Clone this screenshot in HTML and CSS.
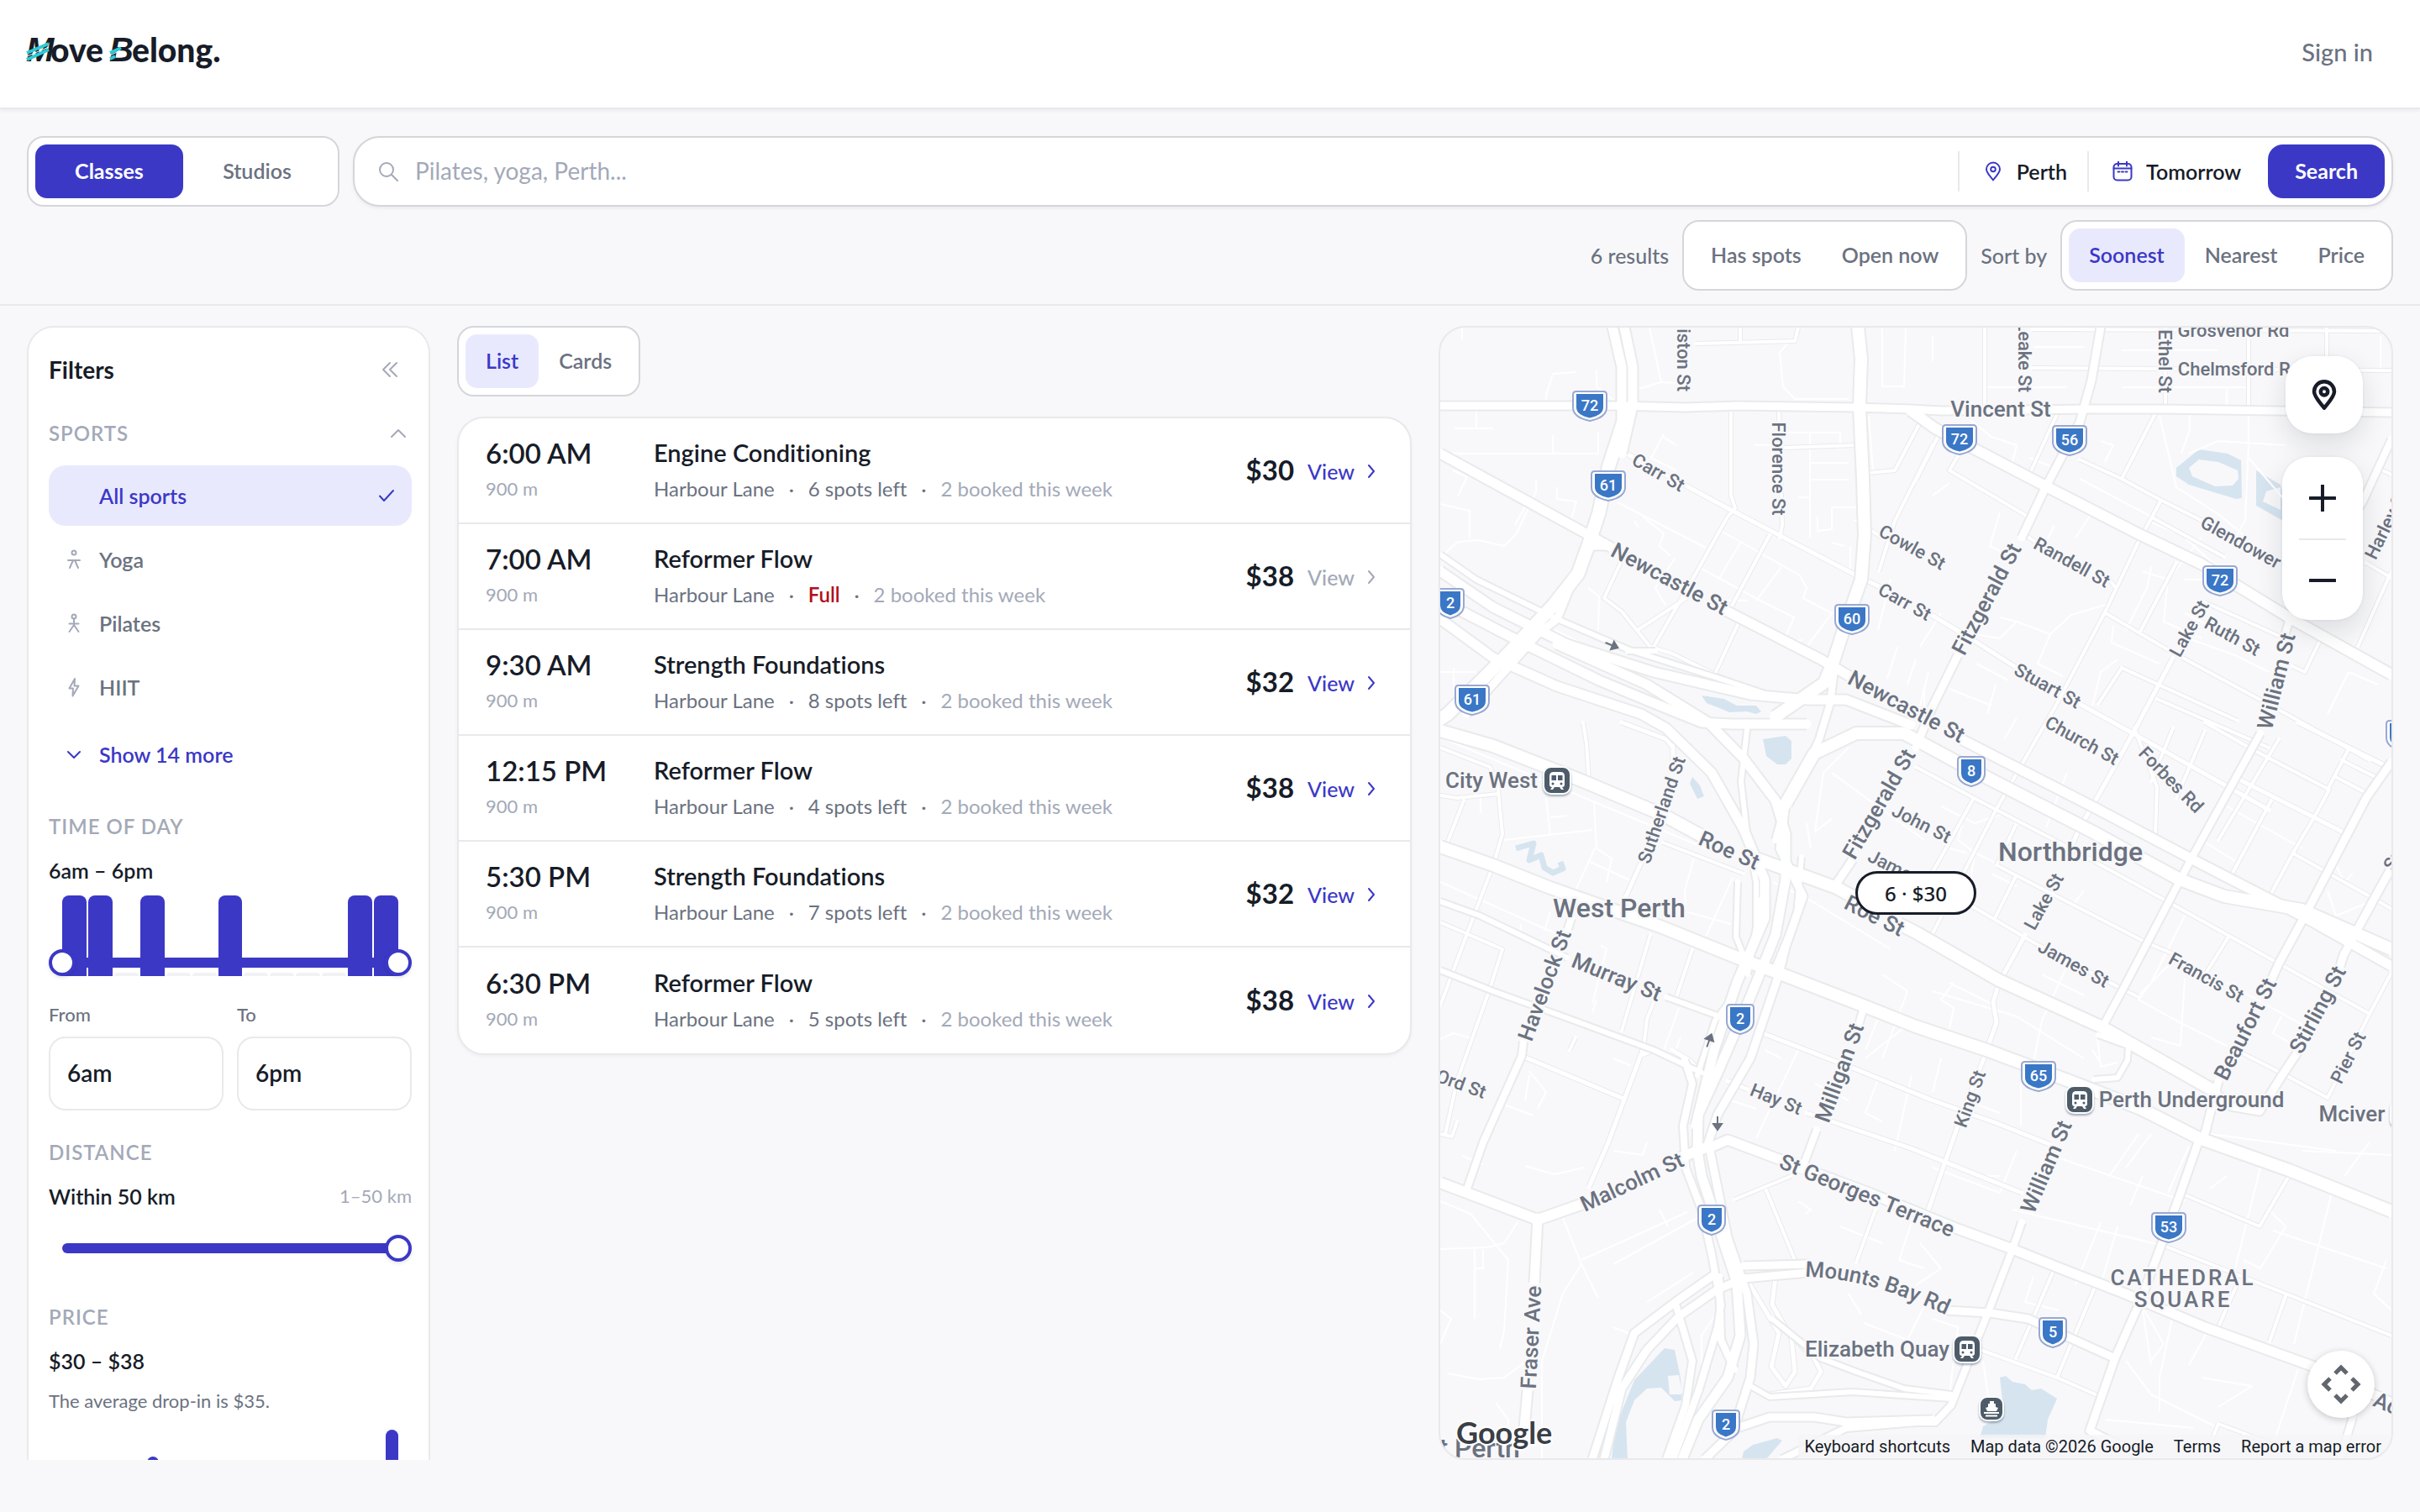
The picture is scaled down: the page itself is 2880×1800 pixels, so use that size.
FILE: index.html
```html
<!DOCTYPE html>
<html lang="en">
<head>
<meta charset="utf-8">
<meta name="viewport" content="width=device-width, initial-scale=1">
<title>Move Belong – Classes in Perth</title>
<link rel="stylesheet" href="styles.css">
</head>
<body>
<svg class="sprite" aria-hidden="true">
  <symbol id="i-search" viewBox="0 0 24 24"><circle cx="10" cy="10" r="8"/><path d="M16 16l7 7"/></symbol>
  <symbol id="i-pin" viewBox="0 0 24 24"><path d="M12 22.500C9 18.500 4 13.500 4 9.500a8 8 0 0 1 16 0C20 13.500 15 18.500 12 22.500z"/><circle cx="12" cy="9.500" r="2.800"/></symbol>
  <symbol id="i-calendar" viewBox="0 0 24 24"><rect x="1.500" y="3" width="21" height="19.500" rx="4"/><path d="M1.500 8.500h21M7 .500v5M17 .500v5"/><path d="M6.500 12.500h2M11 12.500h2M15.500 12.500h2"/></symbol>
  <symbol id="i-up" viewBox="0 0 24 24"><path d="M4 16l8-8 8 8"/></symbol>
  <symbol id="i-down" viewBox="0 0 24 24"><path d="M5 9l7 7 7-7"/></symbol>
  <symbol id="i-right" viewBox="0 0 24 24"><path d="M9 5l6 7-6 7"/></symbol>
  <symbol id="i-check" viewBox="0 0 24 24"><path d="M4 12.500l5 5.500L20 6"/></symbol>
  <symbol id="i-yoga" viewBox="0 0 24 24"><circle cx="12" cy="4" r="2.500"/><path d="M5 13h14M7 22l4-9h2l4 9"/></symbol>
  <symbol id="i-pilates" viewBox="0 0 24 24"><circle cx="12" cy="4" r="2.500"/><path d="M12 6.500V14M6.500 12.500h11M6.500 22l5.500-8 5.500 8"/></symbol>
  <symbol id="i-bolt" viewBox="0 0 24 24"><path d="M13 2L6.500 13.500H11L10.500 22.500 17.500 10.500H12.500z"/></symbol>
  <symbol id="i-collapse" viewBox="0 0 24 24"><path d="M12 4l-8 8 8 8M20 4l-8 8 8 8"/></symbol>
</svg>

<header class="topbar">
  <a class="logo" href="#" aria-label="Move Belong">
    <svg viewBox="0 0 240 48" width="240" height="48">
      <text class="logo-cap" x="-1" y="36">M</text>
      <text class="logo-text" x="28" y="37">ove</text>
      <text class="logo-cap" x="98" y="36">B</text>
      <text class="logo-text" x="125" y="37">elong.</text>
      <path class="logo-gap" d="M0 30L26 19M99 29l12-6"/>
      <path class="logo-stripe" d="M0 26L26 15M0 34L26 22"/>
      <path class="logo-stripe" d="M99 26l13-6M99 33l6-3"/>
    </svg>
  </a>
  <a class="signin" href="#">Sign in</a>
</header>

<section class="toolbar">
  <form class="search-row" action="#">
    <div class="segmented wide">
      <button type="button" class="primary">Classes</button>
      <button type="button">Studios</button>
    </div>
    <div class="searchbox">
      <svg class="icon muted"><use href="#i-search"/></svg>
      <input type="search" aria-label="Search classes" placeholder="Pilates, yoga, Perth...">
      <button type="button" class="facet"><svg class="icon"><use href="#i-pin"/></svg>Perth</button>
      <button type="button" class="facet"><svg class="icon"><use href="#i-calendar"/></svg>Tomorrow</button>
      <button type="submit" class="primary submit">Search</button>
    </div>
  </form>
  <div class="sort-row">
    <span>6 results</span>
    <div class="segmented"><button type="button">Has spots</button><button type="button">Open now</button></div>
    <span>Sort by</span>
    <div class="segmented"><button type="button" class="active">Soonest</button><button type="button">Nearest</button><button type="button">Price</button></div>
  </div>
</section>

<main class="content">
  <aside class="filters">
    <div class="filters-head"><h2>Filters</h2><button type="button" class="plain" aria-label="Collapse filters"><svg class="icon"><use href="#i-collapse"/></svg></button></div>
    <section class="sports">
      <button type="button" class="group-head"><span class="group-title">Sports</span><svg class="icon"><use href="#i-up"/></svg></button>
      <ul>
        <li><button type="button" class="sport selected"><span class="icon"></span><span>All sports</span><svg class="icon"><use href="#i-check"/></svg></button></li>
        <li><button type="button" class="sport"><svg class="icon"><use href="#i-yoga"/></svg><span>Yoga</span></button></li>
        <li><button type="button" class="sport"><svg class="icon"><use href="#i-pilates"/></svg><span>Pilates</span></button></li>
        <li><button type="button" class="sport"><svg class="icon"><use href="#i-bolt"/></svg><span>HIIT</span></button></li>
      </ul>
      <button type="button" class="sport more"><svg class="icon"><use href="#i-down"/></svg><span>Show 14 more</span></button>
    </section>
    <section class="group">
      <h3 class="group-title">Time of day</h3>
      <p class="value">6am – 6pm</p>
      <div class="histogram">
        <div class="bars"><i style="height:100%"></i><i style="height:100%"></i><i></i><i style="height:100%"></i><i></i><i></i><i style="height:100%"></i><i></i><i></i><i></i><i></i><i style="height:100%"></i><i style="height:100%"></i></div>
        <div class="dual-range">
          <input type="range" min="6" max="18" value="6" aria-label="Earliest start">
          <input type="range" min="6" max="18" value="18" aria-label="Latest start">
        </div>
      </div>
      <div class="from-to">
        <label>From<input type="text" value="6am"></label>
        <label>To<input type="text" value="6pm"></label>
      </div>
    </section>
    <section class="group">
      <h3 class="group-title">Distance</h3>
      <div class="value-row"><label class="value" for="distance">Within 50 km</label><span class="hint">1–50 km</span></div>
      <div class="single-range"><input type="range" id="distance" min="1" max="50" value="50"></div>
    </section>
    <section class="group">
      <h3 class="group-title">Price</h3>
      <p class="value">$30 – $38</p>
      <p class="note">The average drop-in is $35.</p>
      <div class="histogram">
        <div class="bars"><i style="height:34%"></i><i></i><i></i><i></i><i></i><i></i><i style="height:67%"></i><i></i><i></i><i></i><i></i><i></i><i></i><i></i><i></i><i></i><i></i><i></i><i></i><i></i><i></i><i></i><i></i><i style="height:100%"></i></div>
      </div>
    </section>
  </aside>

  <section class="results">
    <div class="segmented"><button type="button" class="active">List</button><button type="button">Cards</button></div>
    <ul class="classes">
      <li><div class="when"><strong>6:00 AM</strong><span>900 m</span></div><div class="what"><h3>Engine Conditioning</h3><p><span>Harbour Lane</span><b>·</b><span>6 spots left</span><b>·</b><span class="faint">2 booked this week</span></p></div><div class="price"><strong>$30</strong><a href="#">View<svg class="icon"><use href="#i-right"/></svg></a></div></li>
      <li><div class="when"><strong>7:00 AM</strong><span>900 m</span></div><div class="what"><h3>Reformer Flow</h3><p><span>Harbour Lane</span><b>·</b><span class="full">Full</span><b>·</b><span class="faint">2 booked this week</span></p></div><div class="price"><strong>$38</strong><a class="off" href="#">View<svg class="icon"><use href="#i-right"/></svg></a></div></li>
      <li><div class="when"><strong>9:30 AM</strong><span>900 m</span></div><div class="what"><h3>Strength Foundations</h3><p><span>Harbour Lane</span><b>·</b><span>8 spots left</span><b>·</b><span class="faint">2 booked this week</span></p></div><div class="price"><strong>$32</strong><a href="#">View<svg class="icon"><use href="#i-right"/></svg></a></div></li>
      <li><div class="when"><strong>12:15 PM</strong><span>900 m</span></div><div class="what"><h3>Reformer Flow</h3><p><span>Harbour Lane</span><b>·</b><span>4 spots left</span><b>·</b><span class="faint">2 booked this week</span></p></div><div class="price"><strong>$38</strong><a href="#">View<svg class="icon"><use href="#i-right"/></svg></a></div></li>
      <li><div class="when"><strong>5:30 PM</strong><span>900 m</span></div><div class="what"><h3>Strength Foundations</h3><p><span>Harbour Lane</span><b>·</b><span>7 spots left</span><b>·</b><span class="faint">2 booked this week</span></p></div><div class="price"><strong>$32</strong><a href="#">View<svg class="icon"><use href="#i-right"/></svg></a></div></li>
      <li><div class="when"><strong>6:30 PM</strong><span>900 m</span></div><div class="what"><h3>Reformer Flow</h3><p><span>Harbour Lane</span><b>·</b><span>5 spots left</span><b>·</b><span class="faint">2 booked this week</span></p></div><div class="price"><strong>$38</strong><a href="#">View<svg class="icon"><use href="#i-right"/></svg></a></div></li>
    </ul>
  </section>

  <section class="map" aria-label="Map of Perth">
    <svg class="tiles" viewBox="1714 390 1132 1346" preserveAspectRatio="xMidYMid slice">
      <defs>
        <g id="minor">
          <path class="w5" d="M1930 537L2056 605L2213 687L2240 700M2295 730L2345 760L2400 795M2475 838L2540 874L2700 964"/>
          <path class="w4" d="M2060 490V590L2065 605L2056 615L2018 683L1968 770M2117 490L2121 625L2118 640M2106 637L2060 723M2071 737L2041 802M1930 667L1909 712L1930 728L1964 770L1990 778L2041 803L2110 830M2010 710L1949 750M2071 390V407M2018 409L2136 406L2140 390M2224 563L2255 560L2285 503M2300 530L2255 620L2236 680M2123 533L2209 530M2209 620L2240 640"/>
          <path class="w4" d="M2362 390V483M2418 438L2846 441M2676 400V486M2769 390V441M2418 392L2846 394M2577 390V485M2448 493L2416 563M2311 510L2280 572M2330 543L2320 560L2410 613M2475 547L2525 570L2571 595L2621 620M2565 492L2525 570M2571 597L2544 647L2506 727L2445 843L2425 877L2376 963L2299 1113M2506 730L2586 777L2712 845L2820 905M2563 617L2647 663M2590 670L2548 750M2410 637L2430 650M2510 690L2518 700M2624 717L2712 757M2762 760L2743 800L2728 793M2846 680L2806 770M2826 556L2846 565M2816 670L2846 688"/>
          <path class="w5" d="M2586 783L2540 870L2490 960L2475 985L2460 1020M2410 1113L2379 1170L2372 1193L2376 1217L2362 1257L2330 1340L2295 1440"/>
          <path class="w4" d="M2525 795L2663 858M2567 832L2700 890M2525 795L2497 838M2280 913L2349 950L2464 1010L2579 1073L2712 1147L2820 1207L2846 1158M2299 1050L2349 1080L2422 1123L2525 1177L2545 1187M2376 1030L2556 1123L2590 1137M2820 1207L2770 1307L2720 1280L2667 1253M2349 950L2299 1040M2399 982L2376 1030M2399 1043L2374 1093M2540 867L2567 937L2565 993M2682 893L2772 940L2754 973L2728 1017L2701 1067M2703 953L2655 1043M2731 1017L2820 1067L2846 1082M2787 905L2827 925M2796 890L2770 940M2624 860L2682 893M2651 1117L2620 1167M2586 867L2560 930M2624 870L2590 950M2780 925L2818 945M2712 880L2640 1000"/>
          <path class="w5" d="M2735 860L2846 915M2663 927L2793 993M2090 1227L2209 1273L2300 1310L2376 1337L2441 1363M2056 1287L2080 1297M2150 1325L2274 1367L2406 1420"/>
          <path class="w4" d="M2601 1423L2689 1460L2724 1400M2575 1483L2720 1540L2846 1590M2720 1543L2701 1597M2445 1510L2399 1617M2494 1530L2448 1640M2357 1607L2448 1640L2498 1662M2663 1527L2640 1580M2102 1417L2136 1500M2064 1428L2132 1400M2232 1440L2209 1503M2640 1695L2630 1720M2640 1695L2720 1725"/>
          <path class="w4" d="M1714 947L1734 950L1782 945M1714 890L1773 913L1782 930L1788 993L1777 1030L1754 1090L1714 1197M1742 953L1721 1007M1884 860L1888 885L1891 930M1714 1098L1742 1110L1788 1130L1773 1177L1734 1287L1720 1350M1964 1113L1930 1227M2014 1130L1995 1187M1968 1193L1960 1213L1956 1247M1979 1003L2075 1040M1714 1350L1728 1353L1734 1335M1875 1235L1868 1250"/>
          <path class="w5" d="M1991 887V915M1953 1027L1935 1067M1930 860L1983 880L1991 890M1956 1247L1914 1360L1891 1413M1811 1257L1930 1307M1956 1255L1968 1250"/>
          <path class="w5" d="M2113 1520L2109 1553L2132 1593L2136 1633L2125 1650L2108 1627L2117 1587L2083 1530M2132 1590L2159 1617L2167 1633L2155 1653L2106 1660M2025 1277L2010 1262L1990 1250"/>
        </g>
        <g id="major">
          <path class="w8" d="M1714 483H1922L2006 485L2067 483L2209 485L2274 487L2310 489L2490 487L2571 487L2846 491"/>
          <path class="w10" d="M2274 489L2303 510L2433 578L2548 637L2621 672L2724 735L2846 803"/>
          <path class="w9" d="M1919 389L1930 437V503M1933 389L1943 437V483L1930 540"/>
          <path class="w14" d="M1934 495L1914 557L1903 610L1891 647L1878 683L1849 720L1796 777L1723 850L1700 865"/>
          <path class="w8" d="M1872 690L1853 737L1830 755L1790 800L1745 850M1891 650L1910 650"/>
          <path class="w9" d="M1714 540L1891 637L1918 652M2054 727L2167 785L2201 805M2330 878L2490 960L2609 1023L2739 1090L2846 1150"/>
          <path class="w12" d="M2211 389L2215 427L2213 483L2217 570L2219 637L2215 690L2194 750L2182 787L2171 813L2113 853"/>
          <path class="w7" d="M2184 790L2178 837L2165 880L2159 893L2125 957L2113 1000"/>
          <path class="w6" d="M1714 660L1757 690L1853 737L1937 773L2044 807L2113 830M1937 775L1970 775M1714 1073L1761 1090L1865 1140M1983 1187L2041 1208M1714 1155L1777 1180L1868 1213L1968 1250L2025 1277"/>
          <path class="w9" d="M1714 680L1777 723L1865 767L1968 800L2083 827L2152 833L2197 833L2274 863M1738 727L1815 767L1903 810L1968 837L2025 860L2060 862H2150"/>
          <path class="w9" d="M1714 737L1777 783L1853 817L1953 850L1983 867L2037 920L2075 987L2100 1047V1093L2067 1170L2040 1250L2018 1340"/>
          <path class="w9" d="M1853 767L1960 815L2033 860L2075 903L2113 953L2125 993V1047L2113 1113L2083 1187L2044 1277L2021 1327L2020 1370L2025 1400L2044 1457L2067 1527L2071 1590L2056 1640L2021 1690L2002 1737"/>
          <path class="w8" d="M2125 957L2118 1010L2146 1067L2125 1127L2117 1160L2083 1260L2044 1327L2033 1360L2056 1473L2079 1540L2087 1600L2083 1640L2067 1690"/>
          <path class="w6" d="M2080 860L2072 930L2080 1000L2090 1050V1110L2060 1190L2041 1215L2020 1280M2068 1050L2066 1115L2077 1143M2144 1020L2138 1090L2113 1150M2096 1070L2080 1160"/>
          <path class="w7" d="M2005 1262L2014 1290L2003 1340L2006 1390L2025 1440L2037 1493L2048 1553L2044 1580L2021 1657L1991 1737M1995 1555L2014 1620L2006 1673L1983 1737M2046 1520L2048 1595L2064 1630"/>
          <path class="w12" d="M2125 957L2159 897L2209 873H2266L2334 910L2490 990L2594 1047L2647 1067L2739 1083L2846 1130"/>
          <path class="w11" d="M1714 870L1777 888L1884 930L1979 970L2025 995M2090 1022L2186 1057L2210 1070M2260 1100L2280 1110L2379 1167L2502 1223L2632 1297"/>
          <path class="w11" d="M1714 1008L1777 1030L1845 1057L1930 1087L1976 1103L2075 1143L2113 1157L2217 1197L2280 1222L2364 1250L2471 1290L2548 1320L2617 1355L2724 1393L2846 1442"/>
          <path class="w9" d="M2033 1367L2056 1357L2117 1380L2224 1420L2330 1463L2395 1487L2452 1510L2529 1540L2624 1580L2754 1627L2846 1670"/>
          <path class="w10" d="M1714 1408L1830 1452L1884 1433M2000 1378L2033 1365"/>
          <path class="w9" d="M1830 1450L1826 1527M1818 1655L1814 1700"/>
          <path class="w8" d="M2075 1507L2152 1505M2316 1560L2368 1563L2414 1570L2464 1593L2517 1617M2041 1517L1998 1547L1945 1587L1926 1640L1895 1737M2152 1515L2075 1522L2044 1535L1998 1567L1960 1607L1930 1653L1909 1737"/>
          <path class="w7" d="M2690 873L2609 1020L2529 1173L2502 1223M2724 740L2718 760M2406 1455L2395 1487L2368 1557L2322 1673L2303 1693H2280L2197 1700L2121 1737"/>
          <path class="w8" d="M2846 907L2816 950L2743 1090L2712 1147L2704 1165M2640 1287L2624 1350L2617 1357L2594 1423L2548 1547L2517 1617L2487 1703L2500 1710L2560 1737M2846 1033L2827 1067L2789 1137L2785 1150M2736 1250L2716 1280L2689 1323L2655 1317L2632 1297M2500 389L2489 453L2475 503L2433 583L2406 640M2330 780L2299 843L2280 890M2205 1023L2182 1057"/>
          <path class="w7" d="M2217 1203L2212 1220M2162 1345L2144 1393M1870 1093L1866 1106M1813 1240L1811 1257L1765 1360L1746 1415M2846 523L2812 597L2804 610M2800 1687L2785 1737"/>
          <path class="w6" d="M2083 1650L2106 1663L2205 1657L2322 1665M2109 1570L2167 1617L2209 1633L2266 1653L2322 1660M2492 1285L2520 1283L2532 1262L2533 1245L2497 1232"/>
          <path class="w8" d="M2029 1737L2067 1700L2106 1687L2159 1687L2197 1693L2300 1690"/>
        </g>
      </defs>

      <g class="water">
        <path fill-rule="evenodd" d="M2590 557L2617 535L2651 540L2667 548L2668 593L2661 594L2605 577L2590 567zM2605 557L2617 547L2640 550L2663 560L2664 570L2657 578L2636 579L2609 567z"/>
        <path fill-rule="evenodd" d="M2685 560L2714 577L2726 625L2685 602zM2714 580L2697 585L2693 597L2714 607z"/>
        <path d="M2025 828L2052 832L2067 840H2090L2096 847L2090 850L2079 847L2058 848L2044 842L2031 837z"/>
        <path d="M2098 880L2125 876L2132 882V903L2125 910H2115L2102 900zM2014 925L2023 935L2028 948L2020 951L2011 933z"/>
        <path fill-rule="evenodd" d="M1981 1605L1993 1607L2000 1640L2002 1667L1993 1668L1977 1652L1960 1653L1945 1667L1935 1693L1937 1737H1918L1922 1700L1945 1643zM1985 1638L1998 1637L2002 1660H1987z"/>
        <path d="M2075 1728L2086 1720L2115 1712L2121 1715L2102 1737H2073zM2380 1640L2387 1638L2395 1645L2410 1648L2418 1655L2429 1653L2448 1665L2437 1690L2434 1712H2356L2360 1698L2380 1687L2383 1667z"/>
        <path class="pond" d="M1804 1010L1825 1004L1820 1024L1834 1018L1838 1033L1848 1039L1860 1034L1857 1026"/>
      </g>

      <path class="lanes" d="M1740 390V404M1840 480V470L1848 445L1875 443M1900 440V460L1922 478M1714 540H1903M1848 518V540M1757 490V510M1730 510H1777M1902 515V540M1714 600L1749 608V640M1729 560L1746 568L1735 590M1720 658L1735 645L1760 643L1790 650L1805 635L1828 585V572M1803 625L1815 603M1853 580V594L1876 597L1870 618M1963 390L1977 455L1950 463M1978 455L2012 457M2130 405L2118 420L2122 460L2136 475H2200M2240 390V460H2266L2268 390M1980 517L1965 545L1995 560M1979 520L1995 530M2088 530H2110M2154 515V640M2128 515H2190V535M2154 551H2200M2154 571H2200M2154 592H2140M2224 495L2229 560M2163 615V632L2180 630V604H2209M2195 650L2180 646M2202 650V680M1925 598L2030 652M2048 632L2142 685L2150 700L2146 712L2180 730L2150 770M2072 645L2045 690M2120 675L2090 715M2025 677L2095 715L2135 735L2122 765L2145 762M1993 665L1970 700L1982 720M1988 662L1975 650L1980 635L1955 615M1950 628L1945 620M1890 700L1903 710L1902 750M1850 750L1880 765M1730 795V820M1714 800H1755L1762 810M2055 715H2080M2250 690L2235 750M2258 770L2246 808M2280 785L2270 815M2295 800L2285 840"/>
      <path class="lanes" d="M2300 400V430M2420 413H2480M2525 417H2640M2365 461H2460M2525 461H2676M2650 463V486M2833 400V440M2300 590L2320 575M2345 500L2370 520L2400 530L2395 550M2415 545L2440 555M2500 525L2515 530L2505 550M2475 570L2560 615M2606 490V512L2596 540M2570 495L2590 580L2640 612L2674 640M2676 490V530L2672 620L2660 640M2605 540L2640 525L2720 530M2676 545L2740 620M2605 640L2555 620M2490 610L2470 640M2600 640L2655 690L2600 690M2380 610L2368 650L2400 665M2445 625L2430 655M2620 640L2580 690L2575 740L2620 760M2560 675L2555 700L2530 750M2550 680L2580 690M2515 745L2513 765L2570 790M2506 720L2465 732L2440 755L2400 740L2380 735M2440 755L2425 790L2455 805M2400 740L2380 760L2350 755M2352 790L2390 810M2320 820L2370 840M2375 815L2365 850M2600 730L2640 750M2590 755L2660 780L2700 800M2520 785L2500 800L2490 840M2795 800L2770 850M2795 800L2830 815M2310 730L2285 770M2290 820V850M2400 855L2385 880M2460 920L2435 985M2310 960L2350 980L2380 970M2340 960L2330 1000L2350 1015L2345 1050M2350 1015L2380 1030M2340 1015L2320 1010M2370 1040L2400 1055M2480 1060L2465 1080M2650 960L2740 1010M2620 1000L2660 1025M2600 1090L2560 1170L2545 1190L2590 1215L2620 1230L2650 1245M2545 1185L2590 1140M2600 1165L2595 1245L2560 1235M2640 1110L2690 1135M2780 1030L2790 1050L2800 1040M2770 1060L2780 1090L2830 1070M2650 1170L2740 1220M2715 1210L2705 1230L2740 1250"/>
      <path class="lanes" d="M2320 1170L2370 1195M2325 1170L2310 1190L2325 1200L2320 1225M2300 1180L2400 1210L2480 1260M2460 1150L2430 1215L2415 1290M2430 1160L2480 1185M2490 1250L2500 1265M2495 1225L2500 1270L2520 1265M2405 1290V1340M2340 1310L2380 1325M2310 1260L2300 1300M2380 1400L2350 1400M2440 1375L2600 1430M2300 1390L2380 1420L2400 1370M2545 1350L2510 1400M2560 1350L2530 1390M2605 1365L2580 1420M2550 1400L2535 1435M2395 1440L2575 1483M2500 1455L2470 1530M2520 1460L2500 1530M2690 1390L2660 1510M2650 1400L2630 1415M2700 1440L2720 1460L2690 1510L2670 1500M2705 1465L2750 1480L2840 1510M2775 1420L2760 1480L2730 1600M2790 1400L2820 1360M2740 1370L2846 1375M2630 1350L2780 1370M2840 1500L2825 1540L2846 1560M2550 1560L2560 1625M2552 1560L2575 1600L2560 1620M2585 1570L2570 1640L2570 1680M2530 1620L2560 1660L2600 1680L2640 1700M2505 1690L2560 1695L2610 1700M2620 1640L2680 1650L2640 1675M2630 1580L2605 1625M2420 1520L2410 1550L2450 1560M2285 1480L2310 1510L2280 1530M2300 1570L2330 1580L2320 1660M2360 1620L2370 1690M2705 1720L2735 1630"/>
      <path class="lanes" d="M1790 1000L1895 988M1840 950L1845 995M1845 973L1865 971M1897 955L1900 1010L1918 1022L1912 1050M1898 1010L1875 1060M1890 1025L1940 1048M1762 950V968M1720 880L1910 960L2030 1010M2016 1022L2005 1060L2006 1090M2062 1045L2030 1115M2005 1085L2060 1100M1714 1050L1860 1115M1845 1085L1838 1108M1810 1100V1110M1905 1125L1912 1130L1895 1195M1900 1190L1895 1205M1998 1200L1980 1250M2000 1235L1990 1260M1714 1237L1730 1230L1755 1237M1820 1275L1840 1300L1830 1320M1820 1280L1815 1310M1790 1315L1825 1328M1920 1260L1940 1268M2140 1250L2090 1355M2100 1250L2120 1260M2060 1310L2090 1320M2160 1290L2200 1310M2235 1285L2220 1325L2240 1335M2275 1280L2255 1370M2240 1160L2270 1180L2240 1260M2240 1200L2220 1250M2250 1130L2160 1075L2110 1050M2270 1220L2220 1260M2180 920L2290 1000M2200 890L2170 920L2160 990L2180 975M2150 980L2155 1010M1920 1505L2020 1450M1882 1500L2008 1443M1860 1450L1882 1505L1902 1545M1882 1505L1860 1540L1835 1620V1737M1714 1430L1750 1445L1795 1500L1790 1585L1785 1605M1714 1487L1770 1485L1790 1480L1806 1455M1755 1487V1570M1765 1487V1510H1755M1723 1635L1760 1642L1790 1640L1820 1618M1714 1560L1727 1570L1714 1600M1780 1670L1795 1690V1720M1980 1585L1945 1620M1960 1550L2015 1515M1920 1580L1940 1588M2045 1560L2025 1590V1640M2200 1540L2215 1565M2218 1575L2270 1595M2290 1555L2270 1595M2280 1440L2260 1500L2290 1510M2190 1460L2240 1480M1815 1388L1850 1398L1885 1390M1740 1376L1765 1386M1960 1360L1955 1375L1920 1370M2140 1430L2155 1440L2148 1445M1975 1440L1985 1460"/>

      <g class="casing"><use href="#minor"/></g>
      <g class="fill"><use href="#minor"/></g>
      <g class="casing wide"><use href="#major"/></g>
      <g class="fill"><use href="#major"/></g>

      <g class="arrows">
        <path transform="translate(1918 768) rotate(22)" d="M-8 0H6M1 -5L8 0L1 5z"/>
        <path transform="translate(2034 1239) rotate(-70)" d="M-8 0H6M1 -5L8 0L1 5z"/>
        <path transform="translate(2044 1337) rotate(90)" d="M-8 0H6M1 -5L8 0L1 5z"/>
      </g>

      <g class="streets">
        <text transform="translate(2004 466) rotate(90)" text-anchor="end" dy="8">iston St</text>
        <text transform="translate(2410 467) rotate(90)" text-anchor="end" dy="8">Leake St</text>
        <text transform="translate(2577 430) rotate(90)" dy="8">Ethel St</text>
        <text transform="translate(2117 558) rotate(90)" dy="8">Florence St</text>
        <text transform="translate(1974 562) rotate(30)" dy="8">Carr St</text>
        <text transform="translate(2276 651) rotate(29)" dy="8">Cowle St</text>
        <text transform="translate(2267 716) rotate(29)" dy="8">Carr St</text>
        <text transform="translate(2466 669) rotate(29)" dy="8">Randell St</text>
        <text transform="translate(2667 645) rotate(29)" dy="8">Glendower</text>
        <text transform="translate(2605 748) rotate(-61)" dy="8">Lake St</text>
        <text transform="translate(2657 757) rotate(29)" dy="8">Ruth St</text>
        <text transform="translate(2437 816) rotate(29)" dy="8">Stuart St</text>
        <text transform="translate(2478 881) rotate(29)" dy="8">Church St</text>
        <text transform="translate(2584 928) rotate(46)" dy="8">Forbes Rd</text>
        <text x="2658" y="401">Grosvenor Rd</text>
        <text x="2665" y="447">Chelmsford Rd</text>
        <text transform="translate(2820 664) rotate(-64)" text-anchor="start" dy="8">Harley St</text>
        <text transform="translate(1977 964) rotate(-71)" dy="8">Sutherland St</text>
        <text transform="translate(2287 980) rotate(27)" dy="8">John St</text>
        <text transform="translate(2225 1017) rotate(27)" text-anchor="start" dy="8">James St</text>
        <text transform="translate(2432 1073) rotate(-61)" dy="8">Lake St</text>
        <text transform="translate(2468 1147) rotate(29)" dy="8">James St</text>
        <text transform="translate(2626 1163) rotate(29)" dy="8">Francis St</text>
        <text transform="translate(2794 1259) rotate(-63)" dy="8">Pier St</text>
        <text transform="translate(2344 1308) rotate(-70)" dy="8">King St</text>
        <text transform="translate(2114 1308) rotate(22)" dy="8">Hay St</text>
        <text transform="translate(1739 1290) rotate(20)" dy="8">Ord St</text>
        <text transform="translate(2842 1034) rotate(-64)" text-anchor="start" dy="8">Smith St</text>
      </g>
      <g class="streets large">
        <text transform="translate(1987 689) rotate(28)" dy="9">Newcastle St</text>
        <text transform="translate(2269 841) rotate(28)" dy="9">Newcastle St</text>
        <text transform="translate(2364 713) rotate(-62)" dy="9">Fitzgerald St</text>
        <text transform="translate(2236 957) rotate(-60)" dy="9">Fitzgerald St</text>
        <text transform="translate(2709 811) rotate(-76)" dy="9">William St</text>
        <text transform="translate(2435 1389) rotate(-67)" dy="9">William St</text>
        <text transform="translate(2058 1012) rotate(24)" dy="9">Roe St</text>
        <text transform="translate(2231 1090) rotate(27)" dy="9">Roe St</text>
        <text transform="translate(1838 1173) rotate(-70)" dy="9">Havelock St</text>
        <text transform="translate(1924 1163) rotate(22)" dy="9">Murray St</text>
        <text transform="translate(2189 1277) rotate(-70)" dy="9">Milligan St</text>
        <text transform="translate(2672 1225) rotate(-63)" dy="9">Beaufort St</text>
        <text transform="translate(2758 1202) rotate(-62)" dy="9">Stirling St</text>
        <text transform="translate(1942 1407) rotate(-25)" dy="9">Malcolm St</text>
        <text transform="translate(2222 1423) rotate(22)" dy="9">St Georges Terrace</text>
        <text transform="translate(1822 1592) rotate(-87)" dy="9">Fraser Ave</text>
        <text transform="translate(2826 1665) rotate(22)" text-anchor="start" dy="9">Adelaide Terrace</text>
        <path id="mounts-bay" class="guide" d="M2148 1520C2200 1522 2240 1530 2330 1572"/>
        <text class="follow"><textPath href="#mounts-bay">Mounts Bay Rd</textPath></text>
        <text x="2381" y="496">Vincent St</text>
        <text x="1775" y="938">City West</text>
        <text x="2608" y="1318">Perth Underground</text>
        <text x="2799" y="1335">Mciver</text>
        <text x="2234" y="1615">Elizabeth Quay</text>
      </g>
      <g class="places">
        <text x="1927" y="1092">West Perth</text>
        <text x="2464" y="1025">Northbridge</text>
        <text x="1730" y="1735">West Perth</text>
      </g>
      <g class="streets large square"><text x="2598" y="1530">CATHEDRAL</text><text x="2598" y="1556">SQUARE</text></g>

      <defs>
        <g id="shield2"><path class="rim" d="M-16 -17H16Q20 -17 20 -13V2Q20 14 0 18Q-20 14 -20 2V-13Q-20 -17 -16 -17z"/><path class="blue" d="M-16 -14H16V2Q16 11 0 14.500Q-16 11 -16 2z"/></g>
        <g id="shield1"><path class="rim" d="M-12 -17H12Q16 -17 16 -13V3Q16 14 0 18Q-16 14 -16 3V-13Q-16 -17 -12 -17z"/><path class="blue" d="M-12 -14H12V3Q12 11 0 14.500Q-12 11 -12 3z"/></g>
        <g id="station"><rect class="badge-bg" x="-16" y="-16" width="32" height="32" rx="9"/><path class="white" d="M-9 -5Q-9 -10 -4 -10H4Q9 -10 9 -5V5Q9 8 6 8L8 11H5L3 8H-3L-5 11H-8L-6 8Q-9 8 -9 5z"/><path class="slate" d="M-6.500 -6H-1V0H-6.500zM1 -6H6.500V0H1z"/><circle class="slate" cx="-5" cy="4" r="1.500"/><circle class="slate" cx="5" cy="4" r="1.500"/></g>
      </defs>
      <g class="shields">
        <g transform="translate(1892 483)"><use href="#shield2"/><text y="6">72</text></g>
        <g transform="translate(1914 578)"><use href="#shield2"/><text y="6">61</text></g>
        <g transform="translate(2204 737)"><use href="#shield2"/><text y="6">60</text></g>
        <g transform="translate(1726 718)"><use href="#shield1"/><text y="6">2</text></g>
        <g transform="translate(1752 833)"><use href="#shield2"/><text y="6">61</text></g>
        <g transform="translate(2332 523)"><use href="#shield2"/><text y="6">72</text></g>
        <g transform="translate(2463 524)"><use href="#shield2"/><text y="6">56</text></g>
        <g transform="translate(2642 691)"><use href="#shield2"/><text y="6">72</text></g>
        <g transform="translate(2071 1213)"><use href="#shield1"/><text y="6">2</text></g>
        <g transform="translate(2346 918)"><use href="#shield1"/><text y="6">8</text></g>
        <g transform="translate(2426 1281)"><use href="#shield2"/><text y="6">65</text></g>
        <g transform="translate(2037 1452)"><use href="#shield1"/><text y="6">2</text></g>
        <g transform="translate(2054 1696)"><use href="#shield1"/><text y="6">2</text></g>
        <g transform="translate(2581 1461)"><use href="#shield2"/><text y="6">53</text></g>
        <g transform="translate(2443 1586)"><use href="#shield1"/><text y="6">5</text></g>
        <g transform="translate(2856 875)"><use href="#shield1"/></g>
      </g>
      <use href="#station" x="1853" y="929"/>
      <use href="#station" x="2475" y="1309"/>
      <use href="#station" x="2341" y="1606"/>
      <use href="#station" x="2861" y="1326"/>
      <g transform="translate(2370 1677)"><rect class="badge-bg" x="-14" y="-14" width="28" height="28" rx="9"/><path class="white" d="M-2 -9H3V-6H5V-2L8 -1L6 3H-5L-7 -1L-4 -2V-6H-2zM-9 4H9V6H-9zM-7 7.500H7V9.500H-7z"/></g>
      <text class="brand" x="1733" y="1719">Google</text>
    </svg>

    <button type="button" class="marker">6 · $30</button>
    <div class="controls">
      <button type="button" class="locate" aria-label="Centre map"><svg class="icon"><use href="#i-pin"/></svg></button>
      <div class="zoom">
        <button type="button" aria-label="Zoom in"><svg class="icon" viewBox="0 0 32 32"><path d="M1 16h30M16 1v30"/></svg></button>
        <button type="button" aria-label="Zoom out"><svg class="icon" viewBox="0 0 32 32"><path d="M1 16h30"/></svg></button>
      </div>
    </div>
    <button type="button" class="pan" aria-label="Map camera controls"><svg viewBox="-24 -24 48 48" width="48" height="48"><path d="M-7 -13L0 -20L7 -13M-7 13L0 20L7 13M-13 -7L-20 0L-13 7M13 -7L20 0L13 7"/></svg></button>
    <div class="attribution"><button type="button">Keyboard shortcuts</button><span>Map data ©2026 Google</span><a href="#">Terms</a><a href="#">Report a map error</a></div>
  </section>
</main>
</body>
</html>
```
FILE: styles.css
```css
:root {
  --indigo: #3b38c6;
  --indigo-soft: #e9e9fe;
  --ink: #171c28;
  --slate: #6b7280;
  --faint: #a3a9b8;
  --line: #e9e9ec;
  --line-strong: #d5d6db;
  --page: #f8f8fa;
}

* { box-sizing: border-box; }

body {
  margin: 0;
  height: 100vh;
  display: flex;
  flex-direction: column;
  background: var(--page);
  color: var(--ink);
  font-family: Lato, "Open Sans", sans-serif;
  font-size: 25px;
  font-weight: 600;
  font-variant-ligatures: none;
  overflow: hidden;
}

h2, h3, p, ul { margin: 0; padding: 0; }
ul { list-style: none; }
a { color: inherit; text-decoration: none; }

button {
  font: inherit;
  color: inherit;
  background: none;
  border: 0;
  padding: 0;
  cursor: pointer;
}

input { font: inherit; color: inherit; min-width: 0; margin: 0; }

.sprite { position: absolute; width: 0; height: 0; }

.icon {
  width: 24px;
  height: 24px;
  flex: none;
  fill: none;
  stroke: currentColor;
  stroke-width: 2px;
  stroke-linecap: round;
  stroke-linejoin: round;
}

/* header */
.topbar {
  flex: none;
  height: 130px;
  display: flex;
  align-items: center;
  justify-content: space-between;
  padding: 0 56px 6px 32px;
  background: #fff;
  border-bottom: 2px solid var(--line);
  box-shadow: 0 2px 4px rgba(0, 0, 0, .05);
}
.logo svg { display: block; overflow: visible; }
.logo-text { font: 900 39px Lato, sans-serif; fill: var(--ink); }
.logo-cap { font: italic 700 40px "Liberation Sans Narrow", "Liberation Sans", sans-serif; fill: var(--ink); }
.logo-stripe { stroke: #2ccbd6; stroke-width: 4px; }
.logo-gap { stroke: #fff; stroke-width: 1px; }
.signin { font-size: 29px; color: var(--slate); font-weight: 500; }

/* search and sorting */
.toolbar {
  flex: none;
  display: flex;
  flex-direction: column;
  gap: 16px;
  padding: 32px 32px 16px;
  border-bottom: 2px solid var(--line);
}
.search-row { display: flex; gap: 16px; }
.sort-row { display: flex; gap: 16px; align-items: center; justify-content: flex-end; color: var(--slate); font-weight: 500; }

.segmented {
  display: flex;
  height: 84px;
  padding: 8px;
  background: #fff;
  border: 2px solid var(--line-strong);
  border-radius: 20px;
  color: var(--slate);
}
.segmented button { padding: 0 24px 2px; border-radius: 14px; font-weight: 600; }
.segmented.wide button { width: 176px; }
.segmented .active { background: var(--indigo-soft); color: var(--indigo); }
.segmented .primary, .primary { background: var(--indigo); color: #fff; font-weight: 700; }

.searchbox {
  flex: 1;
  display: flex;
  align-items: center;
  height: 84px;
  padding: 0 8px 0 28px;
  background: #fff;
  border: 2px solid var(--line-strong);
  border-radius: 32px;
  box-shadow: 0 2px 4px rgba(0, 0, 0, .06);
}
.searchbox input {
  flex: 1;
  height: 64px;
  padding: 0 20px 2px;
  border: 0;
  outline: 0;
  background: none;
  font-size: 28px;
  font-weight: 400;
}
.searchbox input::placeholder { color: var(--faint); opacity: 1; }
.muted { color: var(--faint); }
.facet {
  display: flex;
  align-items: center;
  gap: 16px;
  height: 48px;
  padding: 0 24px 0 28px;
  border-left: 2px solid var(--line);
}
.facet .icon { color: var(--indigo); }
.submit { height: 64px; padding: 0 32px 2px; margin-left: 8px; border-radius: 18px; }

/* three columns */
.content {
  flex: 1;
  min-height: 0;
  display: grid;
  grid-template-columns: 480px minmax(0, 1fr) minmax(0, 1fr);
  gap: 32px;
  padding: 24px 32px 62px;
}

/* filters */
.filters {
  overflow: hidden;
  padding: 24px 20px 0 24px;
  background: #fff;
  border: 2px solid var(--line);
  border-bottom: 0;
  border-radius: 32px 32px 0 0;
}
.filters-head { display: flex; justify-content: space-between; align-items: center; height: 52px; padding-right: 14px; }
.filters-head h2 { font-size: 28px; font-weight: 700; }
.plain { display: flex; color: var(--faint); }
.group-title {
  font-size: 24px;
  line-height: 36px;
  font-weight: 600;
  letter-spacing: 1px;
  text-transform: uppercase;
  color: var(--faint);
}
.sports { margin-top: 24px; }
.group-head { display: flex; width: 100%; height: 52px; padding-right: 4px; align-items: center; justify-content: space-between; color: var(--faint); }
.sports ul { display: grid; gap: 4px; margin: 12px 0 8px; }
.sport {
  display: flex;
  width: 100%;
  height: 72px;
  align-items: center;
  gap: 18px;
  padding: 0 18px;
  border-radius: 20px;
  color: var(--slate);
}
.sport > .icon:first-child { color: var(--faint); }
.sport.selected { background: var(--indigo-soft); color: var(--indigo); }
.sport.selected .icon:last-child { margin-left: auto; }
.sport.more, .sport.more > .icon:first-child { color: var(--indigo); }

.group { margin-top: 32px; }
.value { display: block; margin-top: 16px; line-height: 36px; }
.value-row { display: flex; justify-content: space-between; align-items: end; }
.hint { font-size: 22px; line-height: 36px; font-weight: 400; color: var(--faint); }
.note { margin-top: 12px; font-size: 22px; line-height: 36px; font-weight: 400; color: var(--slate); }
.histogram { position: relative; margin-top: 12px; height: 96px; }
.note + .histogram { margin-top: 16px; }
.bars { display: flex; align-items: flex-end; gap: 2px; height: 96px; margin: 0 16px; }
.bars i { flex: 1; height: 4px; background: #f2f2f5; border-radius: 8px 8px 0 0; }
.bars i[style] { background: var(--indigo); }

input[type="range"] {
  appearance: none;
  width: 100%;
  height: 32px;
  background: none;
}
input[type="range"]::-webkit-slider-thumb {
  appearance: none;
  width: 32px;
  height: 32px;
  border: 4px solid var(--indigo);
  border-radius: 50%;
  background: #fff;
  box-shadow: 0 2px 4px rgba(0, 0, 0, .1);
  pointer-events: auto;
}
.dual-range {
  position: absolute;
  inset: auto 0 0;
  display: grid;
  background: linear-gradient(var(--indigo), var(--indigo)) center / calc(100% - 32px) 12px no-repeat;
}
.dual-range input { grid-area: 1 / 1; pointer-events: none; }
.single-range {
  display: grid;
  align-items: center;
  height: 64px;
  margin-top: 12px;
}
.single-range::before {
  content: "";
  grid-area: 1 / 1;
  height: 12px;
  margin: 0 16px;
  border-radius: 6px;
  background: var(--indigo);
}
.single-range input { grid-area: 1 / 1; }

.from-to { display: grid; grid-template-columns: 1fr 1fr; gap: 16px; margin-top: 32px; }
.from-to label { display: grid; gap: 12px; font-size: 22px; line-height: 28px; font-weight: 500; color: var(--slate); }
.from-to input {
  width: 100%;
  height: 88px;
  padding: 0 20px 2px;
  border: 2px solid var(--line);
  border-radius: 20px;
  background: #fff;
  color: var(--ink);
  font-size: 28px;
  font-weight: 600;
}

/* class list */
.results { display: flex; flex-direction: column; align-items: flex-start; gap: 24px; }
.classes {
  width: 100%;
  background: #fff;
  border: 2px solid var(--line);
  border-radius: 32px;
  box-shadow: 0 2px 4px rgba(0, 0, 0, .04);
}
.classes li { display: flex; align-items: center; height: 126px; padding: 0 34px 2px 32px; border-bottom: 2px solid var(--line); }
.classes li:last-child { border-bottom: 0; }
.when { width: 200px; display: grid; gap: 6px; }
.when strong { font-size: 33px; line-height: 40px; font-weight: 600; }
.when span { font-size: 22px; line-height: 34px; font-weight: 400; color: var(--faint); }
.what { flex: 1; display: grid; gap: 6px; }
.what h3 { font-size: 29px; line-height: 40px; font-weight: 600; }
.what p { display: flex; gap: 16px; font-size: 24px; line-height: 34px; font-weight: 400; color: var(--slate); }
.what b { width: 8px; text-align: center; font-weight: 400; }
.what .faint { color: var(--faint); }
.what .full { color: #b01020; font-weight: 600; }
.price { display: flex; align-items: center; gap: 16px; }
.price strong { font-size: 33px; font-weight: 700; }
.price a { display: flex; align-items: center; gap: 8px; padding-top: 4px; color: var(--indigo); font-weight: 500; }
.price a.off { color: var(--faint); }

/* map */
.map {
  position: relative;
  overflow: hidden;
  border: 2px solid var(--line);
  border-radius: 32px;
  background: var(--page);
  font-family: Roboto, sans-serif;
}
.tiles { position: absolute; inset: 0; width: 100%; height: 100%; }

.w4 { --w: 4px; } .w5 { --w: 5px; } .w6 { --w: 6px; } .w7 { --w: 8px; } .w8 { --w: 9px; }
.w9 { --w: 11px; } .w10 { --w: 12px; } .w11 { --w: 14px; } .w12 { --w: 14px; } .w14 { --w: 15px; }
.casing, .fill { fill: none; stroke-linejoin: round; }
.casing { --case: 2px; stroke: #e9eaec; }
.casing.wide { --case: 4px; }
.fill { --case: 0px; stroke: #fff; stroke-linecap: round; }
#minor path, #major path { stroke-width: calc(var(--w) + var(--case)); }
.lanes { fill: none; stroke: #fff; stroke-width: 2px; stroke-linejoin: round; }
.water { fill: #d6e4f0; }
.pond { fill: none; stroke: #d6e4f0; stroke-width: 7px; stroke-linejoin: round; }
.arrows { fill: var(--slate); stroke: var(--slate); stroke-width: 2px; }
.guide { fill: none; }

.streets text, .places text {
  fill: var(--slate);
  stroke: var(--page);
  stroke-width: 5px;
  stroke-linejoin: round;
  paint-order: stroke;
  text-anchor: middle;
  font-weight: 500;
}
.streets text { font-size: 22px; }
.streets.large text { font-size: 26px; }
.streets.square text { letter-spacing: 3px; }
.places text { font-size: 32px; }
.streets text[text-anchor="start"], .streets .follow { text-anchor: start; }
.streets text[text-anchor="end"] { text-anchor: end; }

.rim { fill: #fff; stroke: #98a8d2; stroke-width: 2px; }
.blue { fill: #3a77c6; }
.shields text { fill: #fff; font-size: 18px; font-weight: 500; text-anchor: middle; }
.badge-bg { fill: #4e5c69; stroke: #fff; stroke-width: 2px; filter: drop-shadow(0 2px 1px rgba(80, 95, 120, .5)); }
.white { fill: #fff; }
.slate { fill: #4e5c69; }
.brand { font: 700 36px Lato, sans-serif; fill: #3a3f46; stroke: #fff; stroke-width: 4px; paint-order: stroke; }

.marker {
  position: absolute;
  left: 50%;
  top: 50%;
  transform: translate(-50%, -50%);
  width: 144px;
  height: 52px;
  border: 3px solid var(--ink);
  border-radius: 26px;
  background: #fff;
  color: var(--ink);
  font: 500 24px "Noto Sans", sans-serif;
}
.controls { position: absolute; top: 34px; right: 34px; display: flex; flex-direction: column; align-items: flex-end; gap: 28px; }
.locate, .zoom { background: #fff; border-radius: 32px; box-shadow: 0 0 0 2px rgba(0, 0, 0, .02), 0 12px 32px rgba(20, 25, 40, .12); }
.locate { display: grid; place-items: center; width: 92px; height: 92px; }
.locate .icon { width: 36px; height: 36px; stroke-width: 3px; }
.zoom { display: grid; width: 96px; }
.zoom button { display: grid; place-items: center; height: 97px; }
.zoom button + button::before { content: ""; width: 56px; height: 2px; background: var(--line); }
.zoom button + button { grid-template-rows: 2px 1fr; }
.zoom .icon { width: 32px; height: 32px; stroke-width: 4px; }
.pan {
  position: absolute;
  right: 20px;
  bottom: 48px;
  display: grid;
  place-items: center;
  width: 80px;
  height: 80px;
  border-radius: 50%;
  background: #fff;
  box-shadow: 0 2px 8px rgba(0, 0, 0, .2);
}
.pan svg { fill: none; stroke: #62666d; stroke-width: 5px; }
.attribution {
  position: absolute;
  right: 0;
  bottom: 0;
  display: flex;
  gap: 24px;
  padding: 0 12px 0 8px;
  background: rgba(245, 245, 247, .8);
  font-size: 20px;
  line-height: 28px;
  font-weight: 400;
}
```
